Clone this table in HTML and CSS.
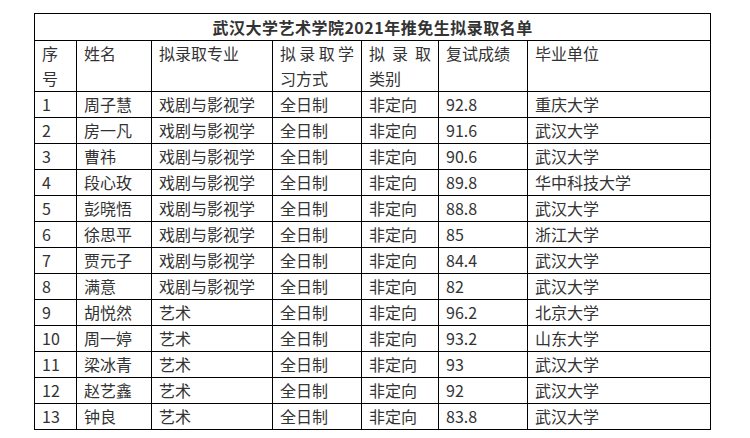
FILE: index.html
```html
<!DOCTYPE html>
<html lang="zh-CN">
<head>
<meta charset="utf-8">
<title>武汉大学艺术学院2021年推免生拟录取名单</title>
<link rel="stylesheet" href="styles.css">
</head>
<body>
<div class="page">
<table class="list">
<colgroup>
<col class="c1"><col class="c2"><col class="c3"><col class="c4"><col class="c5"><col class="c6"><col class="c7">
</colgroup>
<thead>
<tr class="title-row"><th colspan="7">武汉大学艺术学院2021年推免生拟录取名单</th></tr>
<tr class="head-row">
<td>序号</td><td>姓名</td><td>拟录取专业</td><td class="just">拟录取学习方式</td><td class="just">拟录取类别</td><td>复试成绩</td><td>毕业单位</td>
</tr>
</thead>
<tbody>
<tr><td>1</td><td>周子慧</td><td>戏剧与影视学</td><td>全日制</td><td>非定向</td><td>92.8</td><td>重庆大学</td></tr>
<tr><td>2</td><td>房一凡</td><td>戏剧与影视学</td><td>全日制</td><td>非定向</td><td>91.6</td><td>武汉大学</td></tr>
<tr><td>3</td><td>曹祎</td><td>戏剧与影视学</td><td>全日制</td><td>非定向</td><td>90.6</td><td>武汉大学</td></tr>
<tr><td>4</td><td>段心玫</td><td>戏剧与影视学</td><td>全日制</td><td>非定向</td><td>89.8</td><td>华中科技大学</td></tr>
<tr><td>5</td><td>彭晓悟</td><td>戏剧与影视学</td><td>全日制</td><td>非定向</td><td>88.8</td><td>武汉大学</td></tr>
<tr><td>6</td><td>徐思平</td><td>戏剧与影视学</td><td>全日制</td><td>非定向</td><td>85</td><td>浙江大学</td></tr>
<tr><td>7</td><td>贾元子</td><td>戏剧与影视学</td><td>全日制</td><td>非定向</td><td>84.4</td><td>武汉大学</td></tr>
<tr><td>8</td><td>满意</td><td>戏剧与影视学</td><td>全日制</td><td>非定向</td><td>82</td><td>武汉大学</td></tr>
<tr><td>9</td><td>胡悦然</td><td>艺术</td><td>全日制</td><td>非定向</td><td>96.2</td><td>北京大学</td></tr>
<tr><td>10</td><td>周一婷</td><td>艺术</td><td>全日制</td><td>非定向</td><td>93.2</td><td>山东大学</td></tr>
<tr><td>11</td><td>梁冰青</td><td>艺术</td><td>全日制</td><td>非定向</td><td>93</td><td>武汉大学</td></tr>
<tr><td>12</td><td>赵艺鑫</td><td>艺术</td><td>全日制</td><td>非定向</td><td>92</td><td>武汉大学</td></tr>
<tr><td>13</td><td>钟良</td><td>艺术</td><td>全日制</td><td>非定向</td><td>83.8</td><td>武汉大学</td></tr>
</tbody>
</table>
</div>
</body>
</html>
```

FILE: styles.css
```css
html, body {
  margin: 0;
  padding: 0;
  background: #ffffff;
}
.page {
  padding: 13px 0 0 34px;
}
.list {
  border-collapse: collapse;
  table-layout: fixed;
  width: 677px;
  font-family: "Noto Sans CJK SC", "Noto Sans", sans-serif;
  font-size: 16px;
  color: #333333;
}
.c1 { width: 42px; }
.c2 { width: 75px; }
.c3 { width: 121px; }
.c4 { width: 89px; }
.c5 { width: 77px; }
.c6 { width: 89px; }
.c7 { width: 183px; }
.list th,
.list td {
  border: 1px solid #000000;
  padding: 0 7px;
  text-align: left;
  vertical-align: top;
  line-height: 25px;
}
.title-row th {
  height: 26px;
  text-align: center;
  font-weight: bold;
  vertical-align: middle;
  line-height: 26px;
  letter-spacing: 0.5px;
}
.head-row td {
  height: 50px;
}
.list .just {
  text-align: justify;
}
.list tbody td {
  height: 25px;
  vertical-align: middle;
}
```
